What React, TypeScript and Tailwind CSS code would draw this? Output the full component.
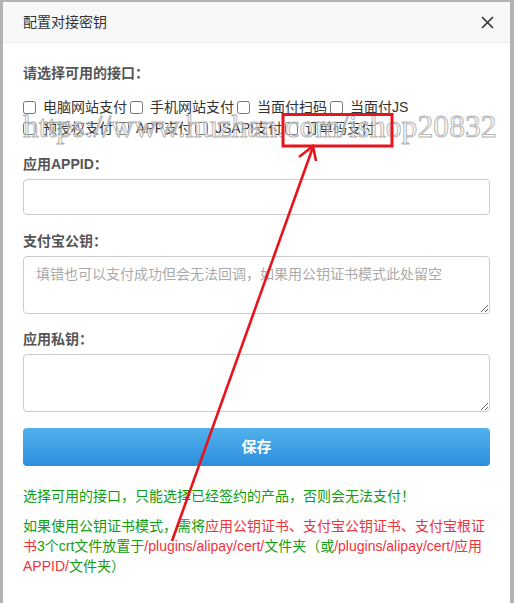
import React from "react";

const PAY_ROW_1 = ["电脑网站支付", "手机网站支付", "当面付扫码", "当面付JS"];
const PAY_ROW_2 = ["预授权支付", "APP支付", "JSAPI支付", "订单码支付"];

const FONT = "font-['Liberation_Sans','Noto_Sans_CJK_SC',sans-serif]";

const Check = ({ label }: { label: string }) => (
  <label className="inline-flex items-center mr-[3px]">
    <input type="checkbox" className="w-[13px] h-[13px] m-0" />
    <span className="ml-[7px]">{label}</span>
  </label>
);

export default function App() {
  return (
    <div className={`relative min-h-[603px] bg-[#b3b3b3] pl-[3px] pr-[4px] pt-[2px] ${FONT}`}>
      <div className="bg-white min-h-[601px] text-[14px] text-[#333]">
        {/* header */}
        <div className="flex items-center justify-between h-[41px] bg-[#f8f8f8] border-b border-[#eee] pl-[20px] pr-[16px]">
          <span className="text-[14px] text-[#333]">配置对接密钥</span>
          <svg width="13" height="13" viewBox="0 0 13 13" className="text-[#333]">
            <path d="M1 1L12 12M12 1L1 12" stroke="currentColor" strokeWidth="1.6" />
          </svg>
        </div>

        <div className="px-[20px] pt-[20px]">
          <div className="font-bold leading-[20px] text-[#555]">请选择可用的接口：</div>

          <div className="mt-[14px] leading-[21px]">
            <div className="flex flex-wrap">
              {PAY_ROW_1.map((p) => (
                <Check key={p} label={p} />
              ))}
            </div>
            <div className="flex flex-wrap">
              {PAY_ROW_2.map((p) => (
                <Check key={p} label={p} />
              ))}
            </div>
          </div>

          <div className="mt-[15px] font-bold leading-[20px] text-[#555]">应用APPID：</div>
          <input className="mt-[5px] block w-full h-[36px] border border-[#ccc] rounded-[4px] px-[12px] outline-none" />

          <div className="mt-[16px] font-bold leading-[20px] text-[#555]">支付宝公钥：</div>
          <textarea
            placeholder="填错也可以支付成功但会无法回调，如果用公钥证书模式此处留空"
            className="mt-[5px] block w-full h-[58px] border border-[#ccc] rounded-[4px] px-[12px] py-[7px] outline-none placeholder:text-[#aaa]"
          />

          <div className="mt-[15px] font-bold leading-[20px] text-[#555]">应用私钥：</div>
          <textarea className="mt-[5px] block w-full h-[58px] border border-[#ccc] rounded-[4px] px-[12px] py-[7px] outline-none" />

          <button className="mt-[16px] block w-full h-[38px] rounded-[4px] bg-gradient-to-b from-[#52b1ec] to-[#2a8fdd] text-white font-bold text-[15px]">
            保存
          </button>

          <p className="mt-[20px] leading-[20px] text-[#119c11]">选择可用的接口，只能选择已经签约的产品，否则会无法支付！</p>
          <p className="mt-[10px] leading-[20px] text-[#119c11]">
            如果使用公钥证书模式，需将
            <span className="text-[#f0323a]">应用公钥证书、支付宝公钥证书、支付宝根证书</span>
            3个crt文件放置于
            <span className="text-[#f0323a]">/plugins/alipay/cert/</span>
            文件夹（或
            <span className="text-[#f0323a]">/plugins/alipay/cert/应用APPID/</span>
            文件夹）
          </p>
        </div>
      </div>

      {/* watermark */}
      <div className="absolute left-[23px] top-[109px] pointer-events-none font-['Liberation_Serif',serif] text-[31.5px] leading-[36px] tracking-[0.1px] text-[rgba(255,255,255,0.35)] [-webkit-text-stroke:1px_#b5b5b5] whitespace-nowrap">
        https://www.huzhan.com/ishop20832
      </div>

      {/* annotation */}
      <svg className="absolute inset-0 pointer-events-none" width="514" height="603" viewBox="0 0 514 603">
        <rect x="283" y="114.5" width="109" height="31.5" fill="none" stroke="#e8141c" strokeWidth="3" />
        <path d="M172 541L313 147" stroke="#e8141c" strokeWidth="2.6" fill="none" />
        <path d="M299 157L313 146L316 161" stroke="#e8141c" strokeWidth="2.6" fill="none" strokeLinejoin="miter" />
      </svg>
    </div>
  );
}
